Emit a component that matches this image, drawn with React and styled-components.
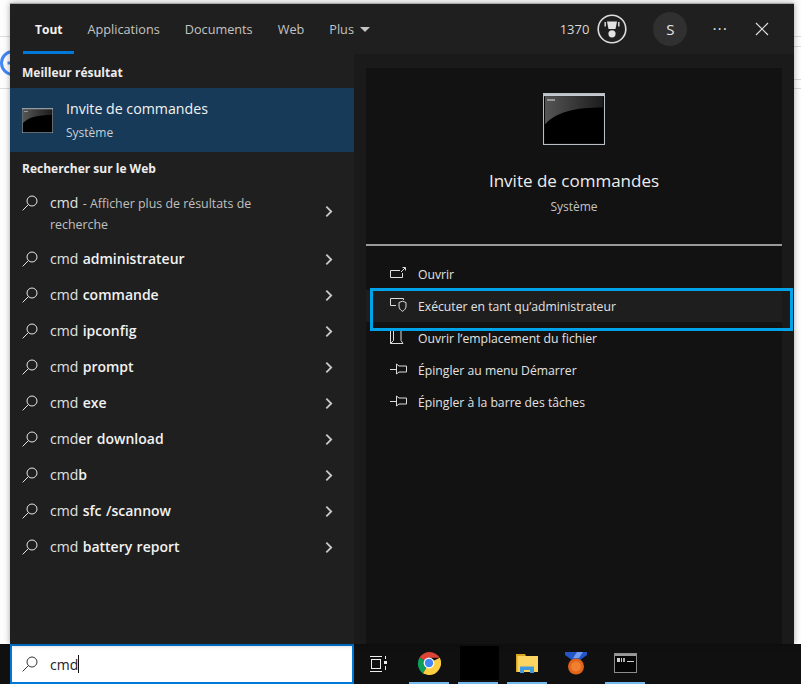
import styled, { createGlobalStyle } from 'styled-components'

const GlobalStyle = createGlobalStyle`
  html, body {
    margin: 0;
    padding: 0;
    background: #fdfdfd;
  }
  body {
    font-family: 'Open Sans', 'Noto Sans', sans-serif;
    overflow: hidden;
  }
`

const SearchIcon = ({ color = '#e6e6e6' }) => (
  <svg width='16' height='16' viewBox='0 0 16 16' fill='none' stroke={color} strokeWidth='1'>
    <circle cx='10' cy='6' r='5' />
    <path d='M6.4 9.6 L0.6 15.4' />
  </svg>
)

const Chevron = () => (
  <svg width='8' height='13' viewBox='0 0 9 14' fill='none' stroke='#c9c9c9' strokeWidth='2'>
    <path d='M1.5 1.5 L7 7 L1.5 12.5' />
  </svg>
)

const CmdPicture = ({ width, height }) => (
  <svg width={width} height={height} viewBox='0 0 62 50' preserveAspectRatio='none'>
    <defs>
      <linearGradient id={`glow${width}`} x1='0' y1='0' x2='1' y2='0'>
        <stop offset='0' stopColor='#555' />
        <stop offset='1' stopColor='#1c1c1c' />
      </linearGradient>
    </defs>
    <rect x='0.5' y='0.5' width='61' height='49' fill='#0a0a0a' stroke='#b9bec4' />
    <rect x='1' y='1' width='60' height='2' fill='#c6ccd2' />
    <rect x='2' y='3' width='58' height='45' fill={`url(#glow${width})`} />
    <path d='M2 30 C 14 18, 32 14, 60 14 L60 48 L2 48 Z' fill='#000' />
    <rect x='4' y='6' width='8' height='1.5' fill='#aaa' />
  </svg>
)

const OpenIcon = () => (
  <svg width='16' height='12' viewBox='0 0 16 12' fill='none' stroke='#ddd'>
    <path d='M10 3.5 H0.5 V10.5 H12.5 V6' />
    <path d='M11 5 L15 1 M12.5 0.5 H15.5 V3.5' />
  </svg>
)

const ShieldIcon = () => (
  <svg width='17' height='14' viewBox='0 0 17 14' fill='none' stroke='#ddd'>
    <path d='M0.5 7.5 V0.5 H13.5 V2' />
    <path d='M0.5 7.5 H6' />
    <path d='M9 4.5 L12.5 3.2 L16 4.5 V8 C16 10.5 14.5 12.2 12.5 13.3 C10.5 12.2 9 10.5 9 8 Z' />
  </svg>
)

const FolderIcon = () => (
  <svg width='14' height='15' viewBox='0 0 14 15' fill='none' stroke='#ddd'>
    <path d='M0.5 0 V13.5 H13 L11 10.5 V0' />
    <path d='M3.5 0 V10.5 L0.5 13.5' />
  </svg>
)

const PinIcon = () => (
  <svg width='17' height='12' viewBox='0 0 17 12' fill='none' stroke='#ddd'>
    <path d='M0 6.5 H6.5' />
    <path d='M6.5 1 V11 L9 9 H16.5 V3 H9 Z' />
  </svg>
)

const TrophyIcon = () => (
  <svg width='30' height='30' viewBox='0 0 30 30'>
    <circle cx='15' cy='15' r='13.8' fill='none' stroke='#dedede' strokeWidth='1.6' />
    <path d='M10 7.5 H20 L18.5 15 H11.5 Z' fill='#e2e2e2' />
    <circle cx='15' cy='19.8' r='3.6' fill='#e2e2e2' />
    <rect x='7.5' y='8' width='1.4' height='4.5' fill='#e2e2e2' />
    <rect x='21.1' y='8' width='1.4' height='4.5' fill='#e2e2e2' />
  </svg>
)

const CloseIcon = () => (
  <svg width='14' height='14' viewBox='0 0 14 14' stroke='#ddd' strokeWidth='1.2'>
    <path d='M1 1 L13 13 M13 1 L1 13' />
  </svg>
)

const TaskViewIcon = () => (
  <svg width='17' height='16' viewBox='0 0 17 16' fill='none' stroke='#eee'>
    <path d='M0 0.5 H12 M0 15.5 H12' />
    <rect x='1.5' y='3.5' width='9' height='9' />
    <rect x='14' y='5' width='3' height='3' fill='#eee' stroke='none' />
    <path d='M15.5 0 V3 M15.5 10 V14' />
  </svg>
)

const GoogleMark = () => (
  <svg width='10' height='30' viewBox='0 0 10 30' fill='none' stroke='#4285f4' strokeWidth='3'>
    <circle cx='13' cy='15' r='11.5' />
    <path d='M7.5 15 H10' />
  </svg>
)

const ChromeIcon = () => (
  <svg width='24' height='24' viewBox='0 0 24 24'>
    <path d='M12 12 L2.5 6.5 A12 12 0 0 1 22.8 6.8 L12 6.8 Z' fill='#db4437' />
    <path d='M12 12 L6 22.4 A12 12 0 0 1 2.5 6.5 Z' fill='#0f9d58' />
    <path d='M12 12 L22.8 6.8 A12 12 0 0 1 11 24 L6 22.4 Z' fill='#ffcd40' />
    <circle cx='12' cy='12' r='5.4' fill='#fff' />
    <circle cx='12' cy='12' r='4.2' fill='#4285f4' />
  </svg>
)

const FolderApp = () => (
  <svg width='22' height='19' viewBox='0 0 22 19'>
    <path d='M0 0 H9 L10 2 H0 Z' fill='#d9a520' />
    <rect x='0' y='2' width='22' height='16' fill='#fcd462' />
    <rect x='0' y='2' width='1.5' height='16' fill='#d9a520' />
    <path d='M4 19 V12.5 H18 V19 H14 V16 H8 V19 Z' fill='#3f9ae0' />
  </svg>
)

const MedalApp = () => (
  <svg width='22' height='24' viewBox='0 0 22 24'>
    <path d='M0 1 H22 V4 L15 9 H7 L0 4 Z' fill='#2456c8' />
    <path d='M8 7 L12 1 H18 L14 7 Z' fill='#6f9bf0' />
    <circle cx='11' cy='15.5' r='8' fill='#e0641a' />
    <circle cx='11' cy='15.5' r='5' fill='#f08030' />
  </svg>
)

const TerminalApp = () => (
  <svg width='23' height='20' viewBox='0 0 23 20'>
    <rect x='0.5' y='0.5' width='22' height='19' fill='#050505' stroke='#8d8d8d' />
    <rect x='1' y='1' width='21' height='2' fill='#9a9a9a' />
    <rect x='3' y='5' width='3' height='4' fill='#cfcfcf' />
    <rect x='7' y='5' width='1' height='4' fill='#cfcfcf' />
    <rect x='9' y='5' width='2' height='4' fill='#a8a8a8' />
    <rect x='13' y='8' width='7' height='1' fill='#cfcfcf' />
  </svg>
)

const tabs = ['Tout', 'Applications', 'Documents', 'Web']

const webResults = [
  { bold: 'administrateur' },
  { bold: 'commande' },
  { bold: 'ipconfig' },
  { bold: 'prompt' },
  { bold: 'exe' },
  { plain: 'cmd', rest: 'er download' },
  { plain: 'cmd', rest: 'b' },
  { bold: 'sfc /scannow' },
  { bold: 'battery report' },
]

const actions = [
  { label: 'Ouvrir', icon: <OpenIcon /> },
  { label: 'Exécuter en tant qu’administrateur', icon: <ShieldIcon />, active: true },
  { label: 'Ouvrir l’emplacement du fichier', icon: <FolderIcon /> },
  { label: 'Épingler au menu Démarrer', icon: <PinIcon /> },
  { label: 'Épingler à la barre des tâches', icon: <PinIcon /> },
]

const App = () => {
  return (
    <Page>
      <GlobalStyle />
      <BackLine $top={36} />
      <BackLine $top={46} $right />
      <BackLine $top={79} $right />
      <BackLine $top={88} />
      <BackLogo>
        <GoogleMark />
      </BackLogo>
      <Flyout>
        <TopBar>
          <Tabs>
            {tabs.map((tab, index) => (
              <Tab key={tab} $active={index === 0}>
                {tab}
              </Tab>
            ))}
            <Tab>
              Plus <Caret />
            </Tab>
          </Tabs>
          <TopRight>
            <Points>1370</Points>
            <TrophyIcon />
            <Avatar>S</Avatar>
            <Dots>···</Dots>
            <CloseIcon />
          </TopRight>
        </TopBar>
        <Columns>
          <LeftColumn>
            <Heading>Meilleur résultat</Heading>
            <BestMatch>
              <CmdPicture width={31} height={25} />
              <div>
                <BestTitle>Invite de commandes</BestTitle>
                <BestSub>Système</BestSub>
              </div>
            </BestMatch>
            <Heading>Rechercher sur le Web</Heading>
            <WebRow $tall>
              <RowIcon $tall>
                <SearchIcon />
              </RowIcon>
              <RowText>
                cmd <Muted>- Afficher plus de résultats de recherche</Muted>
              </RowText>
              <RowArrow $tall>
                <Chevron />
              </RowArrow>
            </WebRow>
            {webResults.map((row) => (
              <WebRow key={row.bold || row.rest}>
                <RowIcon>
                  <SearchIcon />
                </RowIcon>
                <RowText>
                  {row.bold ? (
                    <>
                      cmd <b>{row.bold}</b>
                    </>
                  ) : (
                    <>
                      {row.plain}
                      <b>{row.rest}</b>
                    </>
                  )}
                </RowText>
                <RowArrow>
                  <Chevron />
                </RowArrow>
              </WebRow>
            ))}
          </LeftColumn>
          <RightColumn>
            <Details>
              <Hero>
                <CmdPicture width={62} height={52} />
                <HeroTitle>Invite de commandes</HeroTitle>
                <HeroSub>Système</HeroSub>
              </Hero>
              <ActionList>
                {actions.map((action) => (
                  <Action key={action.label} $active={action.active}>
                    <ActionIcon>{action.icon}</ActionIcon>
                    {action.label}
                  </Action>
                ))}
                <Highlight />
              </ActionList>
            </Details>
          </RightColumn>
        </Columns>
      </Flyout>
      <Taskbar>
        <SearchBox>
          <SearchIcon color='#333' />
          <SearchText>cmd</SearchText>
          <Cursor />
        </SearchBox>
        <TaskView>
          <TaskViewIcon />
        </TaskView>
        <TaskApps>
          <TaskApp $running>
            <ChromeIcon />
          </TaskApp>
          <TaskApp $running>
            <BlackTile />
          </TaskApp>
          <TaskApp $running>
            <FolderApp />
          </TaskApp>
          <TaskApp>
            <MedalApp />
          </TaskApp>
          <TaskApp $running>
            <TerminalApp />
          </TaskApp>
        </TaskApps>
      </Taskbar>
    </Page>
  )
}

const Page = styled.div`
  position: relative;
  width: 801px;
  height: 684px;
  display: flex;
  flex-direction: column;
  overflow: hidden;
  background: #fdfdfd;
`

const BackLine = styled.div`
  position: absolute;
  left: ${(props) => (props.$right ? '790px' : '0')};
  right: 0;
  top: ${(props) => props.$top}px;
  height: 1px;
  background: #dcdcdc;
`

const BackLogo = styled.div`
  position: absolute;
  left: 0;
  top: 48px;
  display: flex;
`

const Flyout = styled.div`
  position: relative;
  margin: 3px 0 0 10px;
  width: 784px;
  height: 641px;
  display: flex;
  flex-direction: column;
  background: #1f1f1f;
  border-top: 1px solid #a8a8a8;
  box-shadow: 0 0 6px rgba(0, 0, 0, 0.35);
`

const TopBar = styled.div`
  height: 50px;
  flex: none;
  display: flex;
  align-items: center;
  justify-content: space-between;
  padding: 0 25px 0 13px;
`

const Tabs = styled.div`
  display: flex;
  height: 100%;
  gap: 1px;
`

const Tab = styled.div`
  display: flex;
  align-items: center;
  gap: 6px;
  height: 100%;
  padding: 3px 12px 0;
  box-sizing: border-box;
  font-size: ${(props) => (props.$active ? '12px' : '12.7px')};
  font-weight: ${(props) => (props.$active ? 700 : 400)};
  color: ${(props) => (props.$active ? '#f2f2f2' : '#c4c4c4')};
  border-bottom: 3px solid ${(props) => (props.$active ? '#0078d7' : 'transparent')};
`

const Caret = styled.span`
  width: 0;
  height: 0;
  border-left: 5px solid transparent;
  border-right: 5px solid transparent;
  border-top: 5px solid #c4c4c4;
`

const TopRight = styled.div`
  display: flex;
  align-items: center;
`

const Points = styled.span`
  font-size: 13px;
  color: #d8d8d8;
  margin-right: 8px;
`

const Avatar = styled.div`
  width: 34px;
  height: 34px;
  margin-left: 26px;
  border-radius: 50%;
  background: #303030;
  color: #e6e6e6;
  font-size: 15px;
  display: flex;
  align-items: center;
  justify-content: center;
`

const Dots = styled.span`
  margin: 0 27px 0 25px;
  color: #d8d8d8;
  font-size: 16px;
  letter-spacing: 1px;
`

const Columns = styled.div`
  flex: 1;
  display: flex;
  min-height: 0;
`

const LeftColumn = styled.div`
  width: 344px;
  flex: none;
  background: #1f1f1f;
  padding-top: 4px;
`

const Heading = styled.div`
  height: 28px;
  margin-bottom: 2px;
  padding: 0 12px;
  display: flex;
  align-items: center;
  font-size: 12px;
  font-weight: 700;
  color: #ededed;
`

const BestMatch = styled.div`
  height: 64px;
  margin-bottom: 2px;
  display: flex;
  align-items: center;
  gap: 13px;
  padding: 0 12px;
  background: #173a58;
`

const BestTitle = styled.div`
  font-size: 14.2px;
  color: #f2f2f2;
  margin-bottom: 6px;
`

const BestSub = styled.div`
  font-size: 12px;
  color: #c8d0d8;
`

const WebRow = styled.div`
  height: ${(props) => (props.$tall ? '57px' : '36px')};
  box-sizing: border-box;
  padding: ${(props) => (props.$tall ? '9px' : '0')} 21px 0 12px;
  display: flex;
  align-items: ${(props) => (props.$tall ? 'flex-start' : 'center')};
  color: #e2e2e2;
`

const RowIcon = styled.div`
  width: 28px;
  flex: none;
  display: flex;
  margin-top: ${(props) => (props.$tall ? '2px' : '0')};
`

const RowArrow = styled.div`
  flex: none;
  display: flex;
  margin-top: ${(props) => (props.$tall ? '12px' : '0')};
`

const RowText = styled.div`
  flex: 1;
  font-size: 14px;
  line-height: 20px;
  padding-right: 50px;
  word-spacing: 0.8px;
  b {
    font-weight: 600;
    color: #f2f2f2;
  }
`

const Muted = styled.span`
  font-size: 12.4px;
  color: #c0c0c0;
  word-spacing: 0;
`

const RightColumn = styled.div`
  flex: 1;
  background: #1a1a1a;
  padding: 14px 12px 0;
  display: flex;
`

const Details = styled.div`
  flex: 1;
  background: #121212;
  display: flex;
  flex-direction: column;
`

const Hero = styled.div`
  height: 178px;
  flex: none;
  box-sizing: border-box;
  padding-top: 25px;
  display: flex;
  flex-direction: column;
  align-items: center;
  border-bottom: 2px solid #9a9a9a;
`

const HeroTitle = styled.div`
  margin-top: 24px;
  font-size: 17px;
  color: #ededed;
`

const HeroSub = styled.div`
  margin-top: 6px;
  font-size: 12px;
  color: #c4c4c4;
`

const ActionList = styled.div`
  position: relative;
  padding-top: 12px;
`

const Action = styled.div`
  height: 32px;
  display: flex;
  align-items: center;
  padding-left: 24px;
  font-size: 12.2px;
  color: #e2e2e2;
  background: ${(props) => (props.$active ? '#1e1e1e' : 'transparent')};
`

const ActionIcon = styled.span`
  width: 28px;
  flex: none;
  display: flex;
  margin-top: -2px;
`

const Highlight = styled.div`
  position: absolute;
  left: 4px;
  top: 42px;
  width: 423px;
  height: 43px;
  box-sizing: border-box;
  border: 3px solid #00a2e8;
`

const Taskbar = styled.div`
  height: 40px;
  flex: none;
  display: flex;
  background: #101010;
`

const SearchBox = styled.div`
  width: 344px;
  margin-left: 10px;
  box-sizing: border-box;
  border: 2px solid #0078d7;
  background: #fff;
  display: flex;
  align-items: center;
  padding-left: 10px;
`

const SearchText = styled.span`
  margin-left: 12px;
  font-size: 14px;
  color: #222;
`

const Cursor = styled.span`
  width: 1px;
  height: 18px;
  background: #111;
`

const TaskView = styled.div`
  width: 48px;
  flex: none;
  display: flex;
  align-items: center;
  justify-content: center;
`

const TaskApps = styled.div`
  display: flex;
  gap: 9px;
  margin-left: 7px;
`

const TaskApp = styled.div`
  width: 40px;
  display: flex;
  align-items: center;
  justify-content: center;
  box-sizing: border-box;
  border-bottom: 2px solid ${(props) => (props.$running ? '#76b9ed' : 'transparent')};
`

const BlackTile = styled.div`
  width: 39px;
  height: 34px;
  flex: none;
  margin-left: 3px;
  background: #000;
`

export default App
